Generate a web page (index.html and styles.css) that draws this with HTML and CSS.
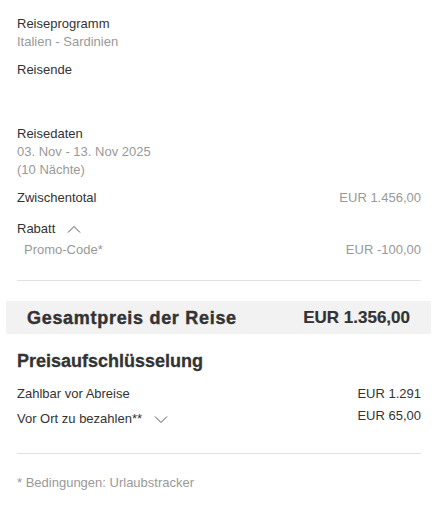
FILE: index.html
```html
<!DOCTYPE html>
<html lang="de">
<head>
<meta charset="utf-8">
<link rel="stylesheet" href="styles.css">
</head>
<body>
<div class="summary">
  <section class="block">
    <div class="label">Reiseprogramm</div>
    <div class="muted">Italien - Sardinien</div>
  </section>
  <section class="block travellers">
    <div class="label">Reisende</div>
  </section>
  <section class="block">
    <div class="label">Reisedaten</div>
    <div class="muted">03. Nov - 13. Nov 2025</div>
    <div class="muted">(10 Nächte)</div>
  </section>
  <div class="row subtotal">
    <span class="label">Zwischentotal</span>
    <span class="muted">EUR 1.456,00</span>
  </div>
  <div class="toggle rabatt">
    <span class="label">Rabatt</span>
    <svg class="chev" width="14" height="8" viewBox="0 0 14 8"><path d="M1 7.5 L7 1.5 L13 7.5" fill="none" stroke="#555" stroke-width="1"/></svg>
  </div>
  <div class="row promo">
    <span class="muted">Promo-Code*</span>
    <span class="muted">EUR -100,00</span>
  </div>
  <hr class="divider first">
</div>
<div class="total">
  <span class="total-title">Gesamtpreis der Reise</span>
  <span class="total-amount">EUR 1.356,00</span>
</div>
<div class="summary">
  <h2 class="heading">Preisaufschlüsselung</h2>
  <div class="row pay">
    <span class="label">Zahlbar vor Abreise</span>
    <span class="label">EUR 1.291</span>
  </div>
  <div class="row pay onsite">
    <span class="toggle">
      <span class="label">Vor Ort zu bezahlen**</span>
      <svg class="chev" width="14" height="8" viewBox="0 0 14 8"><path d="M1 1.5 L7 7.5 L13 1.5" fill="none" stroke="#555" stroke-width="1"/></svg>
    </span>
    <span class="label amount-up">EUR 65,00</span>
  </div>
  <hr class="divider second">
  <p class="footnote">* Bedingungen: Urlaubstracker</p>
</div>
</body>
</html>
```
FILE: styles.css
```css
html, body {
  margin: 0;
  padding: 0;
  background: #fff;
}
body {
  font-family: "Liberation Sans", Arial, sans-serif;
  font-size: 13px;
  line-height: 18px;
  color: #333;
}
.summary {
  padding: 0 18px 0 17px;
}
.block:first-child {
  padding-top: 15px;
}
.block {
  margin-bottom: 10px;
}
.travellers {
  margin-bottom: 46px;
}
.label { color: #333; }
.muted { color: #999; }
.row {
  display: flex;
  justify-content: space-between;
  align-items: flex-start;
}
.toggle {
  display: flex;
  align-items: center;
  gap: 12px;
}
.subtotal { margin-bottom: 13px; }
.rabatt { margin-bottom: 3px; }
.promo { padding-left: 7px; }
.divider {
  border: 0;
  border-top: 1px solid #e2e2e2;
  margin: 0;
}
.divider.first { margin-top: 21px; }
.total {
  margin: 20px 8px 0 6px;
  height: 33px;
  background: #f2f2f2;
  display: flex;
  justify-content: space-between;
  align-items: center;
  padding: 1px 21px 0 21px;
  box-sizing: border-box;
  font-weight: bold;
  font-size: 17px;
  color: #333;
}
.total-title {
  font-size: 18px;
  letter-spacing: 0.7px;
  -webkit-text-stroke: 0.4px #333;
}
.total-amount {
  -webkit-text-stroke: 0.2px #333;
}
.heading {
  margin: 16px 0 13px;
  font-size: 18px;
  line-height: 22px;
  font-weight: bold;
  color: #333;
  -webkit-text-stroke: 0.3px #333;
}
.pay { margin-bottom: 7px; }
.amount-up { position: relative; top: -3px; }
.divider.second { margin-top: 25px; }
.footnote {
  margin: 20px 0 0;
  color: #999;
}
```
